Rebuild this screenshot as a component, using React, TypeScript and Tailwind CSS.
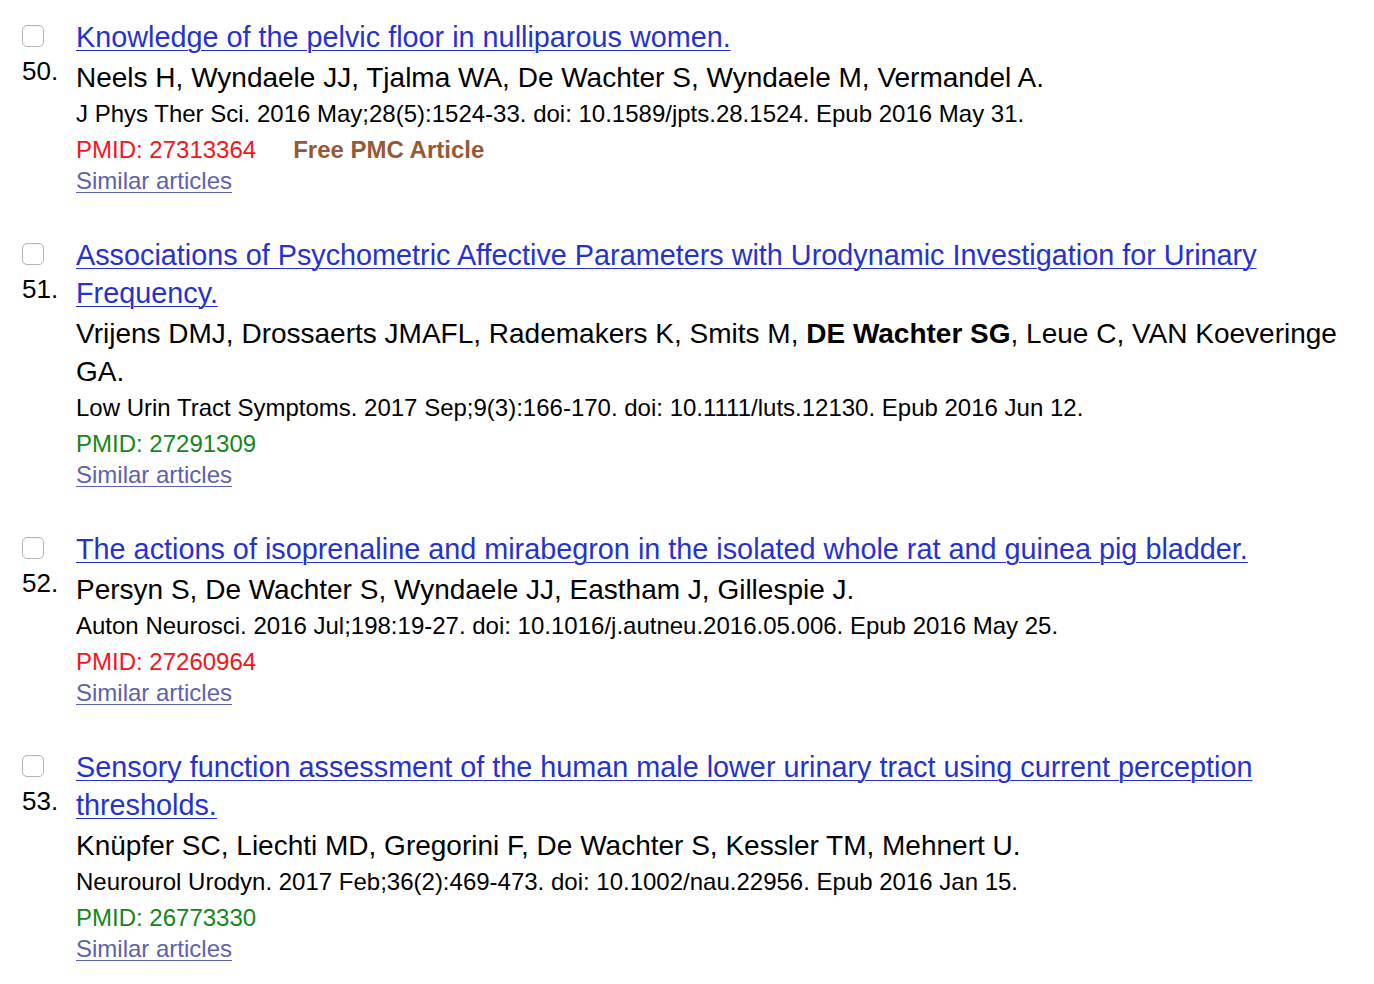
import { Fragment } from "react";

type Article = {
  num: number;
  title: string;
  authors: { text: string; bold?: boolean }[];
  journal: string;
  pmid: string;
  pmidTone: "red" | "green";
  freePmc?: boolean;
};

const articles: Article[] = [
  {
    num: 50,
    title: "Knowledge of the pelvic floor in nulliparous women.",
    authors: [{ text: "Neels H, Wyndaele JJ, Tjalma WA, De Wachter S, Wyndaele M, Vermandel A." }],
    journal: "J Phys Ther Sci. 2016 May;28(5):1524-33. doi: 10.1589/jpts.28.1524. Epub 2016 May 31.",
    pmid: "27313364",
    pmidTone: "red",
    freePmc: true
  },
  {
    num: 51,
    title: "Associations of Psychometric Affective Parameters with Urodynamic Investigation for Urinary Frequency.",
    authors: [
      { text: "Vrijens DMJ, Drossaerts JMAFL, Rademakers K, Smits M, " },
      { text: "DE Wachter SG", bold: true },
      { text: ", Leue C, VAN Koeveringe GA." }
    ],
    journal: "Low Urin Tract Symptoms. 2017 Sep;9(3):166-170. doi: 10.1111/luts.12130. Epub 2016 Jun 12.",
    pmid: "27291309",
    pmidTone: "green"
  },
  {
    num: 52,
    title: "The actions of isoprenaline and mirabegron in the isolated whole rat and guinea pig bladder.",
    authors: [{ text: "Persyn S, De Wachter S, Wyndaele JJ, Eastham J, Gillespie J." }],
    journal: "Auton Neurosci. 2016 Jul;198:19-27. doi: 10.1016/j.autneu.2016.05.006. Epub 2016 May 25.",
    pmid: "27260964",
    pmidTone: "red"
  },
  {
    num: 53,
    title: "Sensory function assessment of the human male lower urinary tract using current perception thresholds.",
    authors: [{ text: "Knüpfer SC, Liechti MD, Gregorini F, De Wachter S, Kessler TM, Mehnert U." }],
    journal: "Neurourol Urodyn. 2017 Feb;36(2):469-473. doi: 10.1002/nau.22956. Epub 2016 Jan 15.",
    pmid: "26773330",
    pmidTone: "green"
  }
];

function ArticleRow({ article }: { article: Article }) {
  return (
    <div className="flex">
      <div className="flex w-[54px] shrink-0 flex-col pt-[8px]">
        <span className="block size-[22px] rounded-[5px] border border-[#b5b5b5] bg-white shadow-[inset_0_1px_1px_rgba(0,0,0,0.05)]" />
        <span className="mt-[5px] block text-[26px] leading-[38px] text-black">{article.num}.</span>
      </div>
      <div className="min-w-0 flex-1 pr-[30px]">
        <a href="#" className="block pt-[1px] text-[28.8px] leading-[38px] text-[#2632d0] underline decoration-1 underline-offset-[3px]">
          {article.title}
        </a>
        <p className="mt-[3px] text-[28px] leading-[38px] text-black">
          {article.authors.map((part, index) => (
            <Fragment key={index}>{part.bold ? <b className="font-bold">{part.text}</b> : part.text}</Fragment>
          ))}
        </p>
        <p className="mt-[1px] text-[24px] leading-[32px] text-black">{article.journal}</p>
        <p className="mt-[2px] flex gap-[37px] text-[24px] leading-[36px]">
          <span className={article.pmidTone === "red" ? "text-[#f5141c]" : "text-[#13861c]"}>PMID: {article.pmid}</span>
          {article.freePmc ? <span className="font-bold text-[#985735]">Free PMC Article</span> : null}
        </p>
        <a href="#" className="-mt-[2px] block w-fit text-[24px] leading-[30px] text-[#5d62ad] underline decoration-1 underline-offset-[3px]">
          Similar articles
        </a>
      </div>
    </div>
  );
}

export default function App() {
  return (
    <div className="min-h-screen bg-white pl-[22px] pt-[17px] font-['Liberation_Sans',Arial,sans-serif]">
      <div className="flex flex-col gap-[39px]">
        {articles.map((article) => (
          <ArticleRow key={article.num} article={article} />
        ))}
      </div>
    </div>
  );
}
